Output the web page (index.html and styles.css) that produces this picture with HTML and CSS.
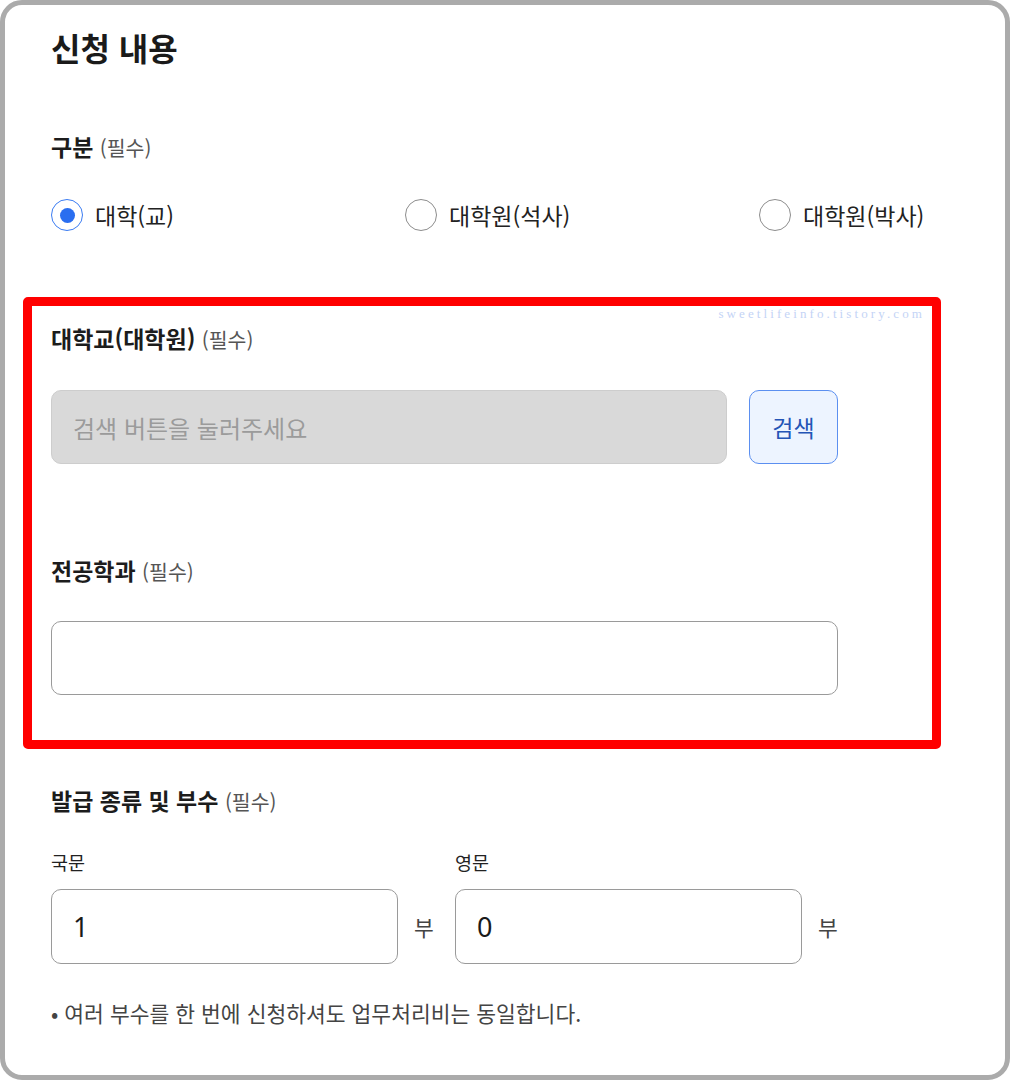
FILE: index.html
```html
<!DOCTYPE html>
<html lang="ko">
<head>
    <meta charset="UTF-8">
    <meta name="viewport" content="width=device-width, initial-scale=1.0">
    <title>신청 내용</title>
    <link rel="stylesheet" href="styles.css">
</head>
<body>

<div class="frame">
    <!-- Title -->
    <h1 class="title">신청 내용</h1>

    <!-- Degree type -->
    <div class="label label-first">구분 <span class="req">(필수)</span></div>
    <div class="radios">
        <label class="radio">
            <input type="radio" name="degree" value="bachelor" checked>
            <span>대학(교)</span>
        </label>
        <label class="radio">
            <input type="radio" name="degree" value="master">
            <span>대학원(석사)</span>
        </label>
        <label class="radio">
            <input type="radio" name="degree" value="doctor">
            <span>대학원(박사)</span>
        </label>
    </div>

    <!-- Highlighted school / major block -->
    <section class="highlight">
        <span class="watermark">sweetlifeinfo.tistory.com</span>

        <div class="label">대학교(대학원) <span class="req">(필수)</span></div>
        <div class="search-row">
            <input type="text" class="search-input" placeholder="검색 버튼을 눌러주세요" disabled>
            <button type="button" class="search-btn">검색</button>
        </div>

        <div class="label label-major">전공학과 <span class="req">(필수)</span></div>
        <input type="text" class="text-input">
    </section>

    <!-- Copies -->
    <div class="label label-copies">발급 종류 및 부수 <span class="req">(필수)</span></div>
    <div class="copies">
        <div class="copy">
            <div class="copy-label">국문</div>
            <div class="copy-row">
                <input type="text" class="num-input" value="1">
                <span class="unit">부</span>
            </div>
        </div>
        <div class="copy">
            <div class="copy-label">영문</div>
            <div class="copy-row">
                <input type="text" class="num-input" value="0">
                <span class="unit">부</span>
            </div>
        </div>
    </div>

    <p class="note">• 여러 부수를 한 번에 신청하셔도 업무처리비는 동일합니다.</p>
</div>

</body>
</html>
```

FILE: styles.css
```css
/* General Page Styles */
body {
    margin: 0;
    background: #ffffff;
    font-family: "Noto Sans CJK KR", "Noto Sans", sans-serif;
    color: #1c1c1c;
}

/* Outer device frame */
.frame {
    box-sizing: border-box;
    width: 1010px;
    height: 1080px;
    border: 5px solid #ababab;
    border-radius: 22px;
    padding: 22px 0 0 46px;
    overflow: hidden;
}

.title {
    margin: 0;
    font-size: 32px;
    line-height: 40px;
    font-weight: 700;
    color: #1a1a1a;
}

/* Field labels */
.label {
    font-size: 23px;
    line-height: 30px;
    font-weight: 700;
    color: #1c1c1c;
}

.label .req {
    font-size: 20.5px;
    line-height: 1;
    font-weight: 400;
    color: #555;
}

.label-first {
    margin-top: 64px;
}

/* Radio group */
.radios {
    display: grid;
    grid-template-columns: 354px 354px auto;
    margin-top: 37px;
    height: 34px;
}

.radio {
    display: flex;
    align-items: center;
    gap: 12px;
    font-size: 23px;
    line-height: 34px;
    color: #222;
}

.radio input {
    appearance: none;
    -webkit-appearance: none;
    box-sizing: border-box;
    width: 32px;
    height: 32px;
    margin: 0;
    border: 1px solid #8d8d8d;
    border-radius: 50%;
    display: flex;
    align-items: center;
    justify-content: center;
}

.radio input:checked {
    border-color: #3b7cf2;
}

.radio input:checked::after {
    content: "";
    width: 15px;
    height: 15px;
    border-radius: 50%;
    background: #2a6ef0;
}

/* Red highlight box */
.highlight {
    position: relative;
    box-sizing: border-box;
    width: 918px;
    margin: 65px 0 0 -28px;
    padding: 17px 0 45px 19px;
    border: 9px solid #ff0000;
    border-radius: 5px;
}

.watermark {
    position: absolute;
    top: 0;
    right: 5px;
    padding: 0 2px;
    background: #ffffff;
    font-family: "Liberation Serif", serif;
    font-size: 13px;
    line-height: 16px;
    letter-spacing: 3.1px;
    color: #c4d4f6;
}

.search-row {
    display: flex;
    gap: 22px;
    margin-top: 37px;
}

.search-input {
    box-sizing: border-box;
    width: 676px;
    height: 74px;
    padding: 0 21px;
    border: 1px solid #cdcdcd;
    border-radius: 10px;
    background: #d9d9d9;
    font-family: inherit;
    font-size: 24px;
}

.search-input::placeholder {
    color: #9b9b9b;
}

.search-btn {
    box-sizing: border-box;
    width: 89px;
    height: 74px;
    border: 1px solid #5b8ff0;
    border-radius: 10px;
    background: #edf4ff;
    font-family: inherit;
    font-size: 23px;
    font-weight: 400;
    color: #2454b6;
    cursor: pointer;
}

.label-major {
    margin-top: 91px;
}

.text-input {
    display: block;
    box-sizing: border-box;
    width: 787px;
    height: 74px;
    margin-top: 36px;
    padding: 0 21px;
    border: 1px solid #9a9a9a;
    border-radius: 10px;
    background: #ffffff;
    font-family: inherit;
    font-size: 24px;
}

/* Copies */
.label-copies {
    margin-top: 36px;
}

.copies {
    display: grid;
    grid-template-columns: 404px 404px;
    margin-top: 35px;
}

.copy-label {
    font-size: 18.5px;
    line-height: 24px;
    color: #222;
}

.copy-row {
    display: flex;
    align-items: center;
    gap: 16px;
    margin-top: 15px;
}

.num-input {
    box-sizing: border-box;
    width: 347px;
    height: 75px;
    padding: 0 21px;
    border: 1px solid #9a9a9a;
    border-radius: 10px;
    background: #ffffff;
    font-family: "Noto Sans", sans-serif;
    font-size: 27px;
    color: #1a1a1a;
}

.unit {
    font-size: 21.5px;
    color: #444;
}

.note {
    margin: 35px 0 0;
    font-size: 21.5px;
    line-height: 28px;
    color: #444;
}
```
